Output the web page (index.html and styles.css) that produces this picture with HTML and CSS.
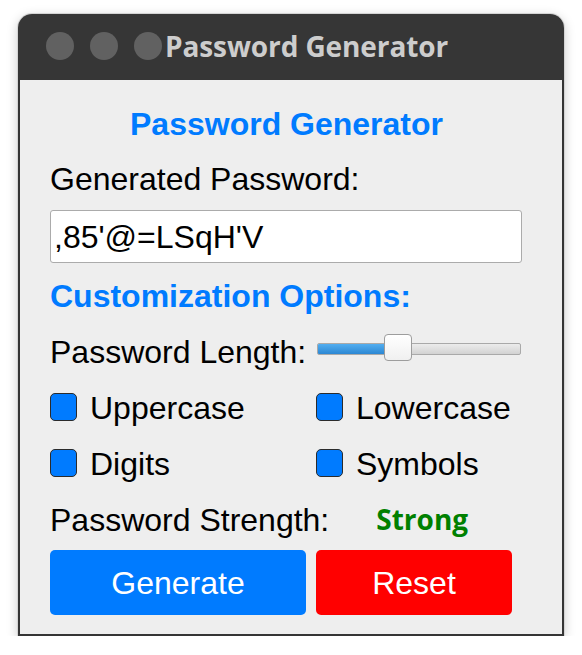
FILE: index.html
```html
<!DOCTYPE html>
<html>
<head>
<meta charset="utf-8">
<link rel="stylesheet" href="styles.css">
</head>
<body>
<div class="window">
  <div class="titlebar">
    <span class="dot"></span><span class="dot"></span><span class="dot"></span>
    <span class="title">Password Generator</span>
  </div>
  <div class="content">
    <div class="heading">Password Generator</div>
    <div class="label gen-label">Generated Password:</div>
    <div class="field">,85'@=LSqH'V</div>
    <div class="subheading">Customization Options:</div>
    <div class="length-row">
      <span class="label">Password Length:</span>
      <div class="slider">
        <div class="fill"></div>
        <div class="thumb"></div>
      </div>
    </div>
    <div class="checks">
      <div class="check"><span class="box"></span><span class="check-label">Uppercase</span></div>
      <div class="check"><span class="box"></span><span class="check-label">Lowercase</span></div>
      <div class="check row2"><span class="box"></span><span class="check-label">Digits</span></div>
      <div class="check row2"><span class="box"></span><span class="check-label">Symbols</span></div>
    </div>
    <div class="strength-row">
      <span class="label">Password Strength:</span>
      <span class="strong">Strong</span>
    </div>
    <div class="buttons">
      <div class="btn generate">Generate</div>
      <div class="btn reset">Reset</div>
    </div>
  </div>
</div>
</body>
</html>
```
FILE: styles.css
```css
html, body {
  margin: 0;
  padding: 0;
  background: #ffffff;
}
body {
  font-family: "Liberation Sans", Arial, sans-serif;
}
.window {
  margin: 14px 0 0 18px;
  width: 546px;
  height: 622px;
  display: flex;
  flex-direction: column;
  border-radius: 14px 14px 0 0;
  box-shadow: 0 0 0 1px #d4d4d4, 0 3px 12px rgba(0, 0, 0, 0.22);
}
.titlebar {
  height: 66px;
  background: #363636;
  border-radius: 14px 14px 0 0;
  display: flex;
  align-items: center;
  padding-left: 28px;
  box-sizing: border-box;
  padding-bottom: 2px;
}
.dot {
  width: 28px;
  height: 28px;
  border-radius: 50%;
  background: #616161;
  margin-right: 16px;
}
.dot:nth-child(3) {
  margin-right: 3px;
}
.title {
  font-family: "Open Sans", "DejaVu Sans", sans-serif;
  font-weight: 700;
  font-size: 28px;
  color: #cdcdcd;
  letter-spacing: -0.1px;
}
.content {
  flex: 1;
  background: #eeeeee;
  border: 2px solid #353535;
  border-top: none;
  padding: 0 0 0 30px;
  display: flex;
  flex-direction: column;
  font-size: 32px;
  line-height: 36px;
  color: #000;
}
.heading {
  margin-top: 26px;
  margin-left: -30px;
  margin-right: 9px;
  text-align: center;
  font-weight: 700;
  color: #007bff;
}
.gen-label {
  margin-top: 19px;
}
.field {
  margin-top: 13px;
  width: 472px;
  height: 53px;
  box-sizing: border-box;
  background: #ffffff;
  border: 1px solid #ababab;
  border-radius: 3px;
  padding-left: 3px;
  display: flex;
  align-items: center;
}
.subheading {
  margin-top: 15px;
  font-weight: 700;
  color: #007bff;
}
.length-row {
  margin-top: 20px;
  display: flex;
  align-items: center;
}
.slider {
  position: relative;
  margin-left: 11px;
  margin-top: -7px;
  width: 204px;
  height: 12px;
  box-sizing: border-box;
  border: 1px solid #a9a9a9;
  border-radius: 2px;
  background: linear-gradient(#ececec, #d2d2d2);
}
.fill {
  width: 75px;
  height: 100%;
  background: linear-gradient(#52aef0, #2c87d3);
  border-radius: 1px 0 0 1px;
}
.thumb {
  position: absolute;
  left: 66px;
  top: -10px;
  width: 28px;
  height: 27px;
  box-sizing: border-box;
  background: linear-gradient(#ffffff, #f0f0f0);
  border: 1px solid #9d9d9d;
  border-radius: 4px;
}
.checks {
  margin-top: 17px;
  display: grid;
  grid-template-columns: 266px 1fr;
}
.check {
  display: flex;
  align-items: center;
  height: 36px;
}
.check.row2 {
  margin-top: 20px;
}
.check-label {
  margin-top: 5px;
}
.box {
  width: 27px;
  height: 28px;
  box-sizing: border-box;
  background: #007bff;
  border: 1px solid #2b2b2b;
  border-radius: 5px;
  margin-right: 13px;
  margin-top: 3px;
}
.strength-row {
  margin-top: 23px;
  display: flex;
  align-items: center;
}
.strong {
  margin-left: 47px;
  font-family: "Open Sans", "DejaVu Sans", sans-serif;
  font-weight: 700;
  font-size: 28px;
  color: #008000;
  margin-top: -3px;
}
.buttons {
  margin-top: 12px;
  display: flex;
  gap: 10px;
}
.btn {
  height: 65px;
  border-radius: 5px;
  color: #ffffff;
  display: flex;
  align-items: center;
  justify-content: center;
}
.generate {
  width: 256px;
  background: #007bff;
}
.reset {
  width: 196px;
  background: #ff0000;
}
```
